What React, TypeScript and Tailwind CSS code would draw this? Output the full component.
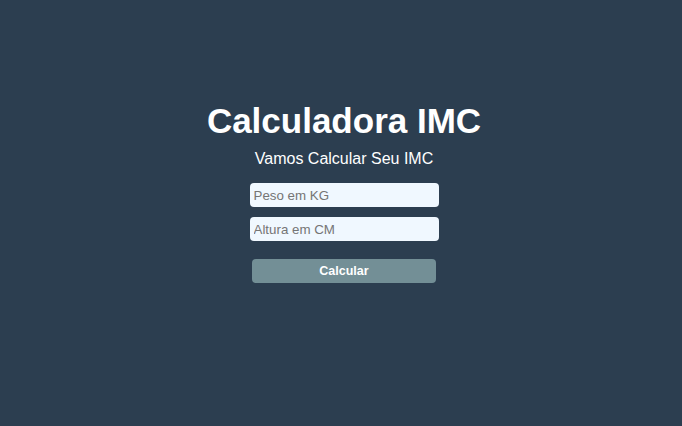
export default function App() {
  return (
    <main className="min-h-screen w-full bg-[#2c3e50] text-white font-['Liberation_Sans',Arial,sans-serif]">
      <div className="flex flex-col items-center pt-[100px] pl-[6px]">
        <h1 className="text-[35px] font-bold leading-[42px]">Calculadora IMC</h1>
        <p className="text-[16px] leading-[18px] mt-[8px]">Vamos Calcular Seu IMC</p>

        <form className="flex flex-col items-center mt-[15px]" onSubmit={e => e.preventDefault()}>
          <input
            type="text"
            placeholder="Peso em KG"
            className="w-[189px] h-[24px] rounded-[4px] bg-[#f0f8ff] px-[4px] text-[13.33px] text-black placeholder:text-[#757575] outline-none"
          />
          <input
            type="text"
            placeholder="Altura em CM"
            className="w-[189px] h-[24px] rounded-[4px] bg-[#f0f8ff] px-[4px] text-[13.33px] text-black placeholder:text-[#757575] outline-none mt-[10px]"
          />
          <button
            type="submit"
            className="w-[184px] h-[24px] rounded-[4px] bg-[#738f96] text-white text-[12.5px] font-bold mt-[18px]"
          >
            Calcular
          </button>
        </form>
      </div>
    </main>
  );
}
